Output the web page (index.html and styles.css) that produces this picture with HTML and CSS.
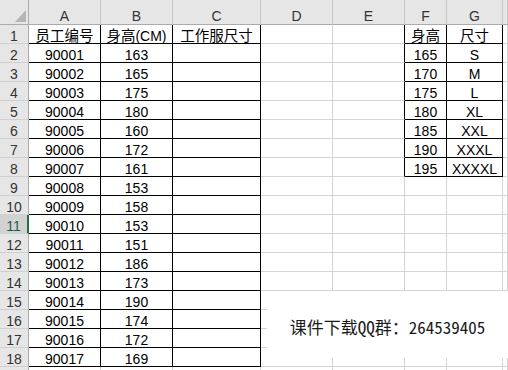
FILE: index.html
```html
<!DOCTYPE html>
<html lang="zh-CN">
<head>
<meta charset="utf-8">
<title>工作服尺寸</title>
<link rel="stylesheet" href="styles.css">
</head>
<body>
<div class="sheet">
  <div class="corner"><svg width="28" height="24" viewBox="0 0 28 24"><polygon points="15,22 26,22 26,10" fill="#b5b5b5"/></svg></div>
  <div class="ch">A</div><div class="ch">B</div><div class="ch">C</div><div class="ch">D</div><div class="ch">E</div><div class="ch">F</div><div class="ch">G</div><div class="ch"></div>

  <div class="rh">1</div><div class="c k"><span class="zh">员工编号</span></div><div class="c k"><span class="zh">身高</span>(CM)</div><div class="c k"><span class="zh">工作服尺寸</span></div><div class="c"></div><div class="c kr"></div><div class="c k"><span class="zh">身高</span></div><div class="c k"><span class="zh">尺寸</span></div><div class="c"></div>
  <div class="rh">2</div><div class="c k">90001</div><div class="c k">163</div><div class="c k"></div><div class="c"></div><div class="c kr"></div><div class="c k">165</div><div class="c k">S</div><div class="c"></div>
  <div class="rh">3</div><div class="c k">90002</div><div class="c k">165</div><div class="c k"></div><div class="c"></div><div class="c kr"></div><div class="c k">170</div><div class="c k">M</div><div class="c"></div>
  <div class="rh">4</div><div class="c k">90003</div><div class="c k">175</div><div class="c k"></div><div class="c"></div><div class="c kr"></div><div class="c k">175</div><div class="c k">L</div><div class="c"></div>
  <div class="rh">5</div><div class="c k">90004</div><div class="c k">180</div><div class="c k"></div><div class="c"></div><div class="c kr"></div><div class="c k">180</div><div class="c k">XL</div><div class="c"></div>
  <div class="rh">6</div><div class="c k">90005</div><div class="c k">160</div><div class="c k"></div><div class="c"></div><div class="c kr"></div><div class="c k">185</div><div class="c k">XXL</div><div class="c"></div>
  <div class="rh">7</div><div class="c k">90006</div><div class="c k">172</div><div class="c k"></div><div class="c"></div><div class="c kr"></div><div class="c k">190</div><div class="c k">XXXL</div><div class="c"></div>
  <div class="rh">8</div><div class="c k">90007</div><div class="c k">161</div><div class="c k"></div><div class="c"></div><div class="c kr"></div><div class="c k">195</div><div class="c k">XXXXL</div><div class="c"></div>
  <div class="rh">9</div><div class="c k">90008</div><div class="c k">153</div><div class="c k"></div><div class="c"></div><div class="c"></div><div class="c"></div><div class="c"></div><div class="c"></div>
  <div class="rh">10</div><div class="c k">90009</div><div class="c k">158</div><div class="c k"></div><div class="c"></div><div class="c"></div><div class="c"></div><div class="c"></div><div class="c"></div>
  <div class="rh sel">11</div><div class="c k">90010</div><div class="c k">153</div><div class="c k"></div><div class="c"></div><div class="c"></div><div class="c"></div><div class="c"></div><div class="c"></div>
  <div class="rh">12</div><div class="c k">90011</div><div class="c k">151</div><div class="c k"></div><div class="c"></div><div class="c"></div><div class="c"></div><div class="c"></div><div class="c"></div>
  <div class="rh">13</div><div class="c k">90012</div><div class="c k">186</div><div class="c k"></div><div class="c"></div><div class="c"></div><div class="c"></div><div class="c"></div><div class="c"></div>
  <div class="rh">14</div><div class="c k">90013</div><div class="c k">173</div><div class="c k"></div><div class="c"></div><div class="c"></div><div class="c"></div><div class="c"></div><div class="c"></div>
  <div class="rh">15</div><div class="c k">90014</div><div class="c k">190</div><div class="c k"></div><div class="c"></div><div class="c"></div><div class="c"></div><div class="c"></div><div class="c"></div>
  <div class="rh">16</div><div class="c k">90015</div><div class="c k">174</div><div class="c k"></div><div class="c"></div><div class="c"></div><div class="c"></div><div class="c"></div><div class="c"></div>
  <div class="rh">17</div><div class="c k">90016</div><div class="c k">172</div><div class="c k"></div><div class="c"></div><div class="c"></div><div class="c"></div><div class="c"></div><div class="c"></div>
  <div class="rh">18</div><div class="c k">90017</div><div class="c k">169</div><div class="c k"></div><div class="c"></div><div class="c"></div><div class="c"></div><div class="c"></div><div class="c"></div>
  <div class="rh"></div><div class="c"></div><div class="c"></div><div class="c"></div><div class="c"></div><div class="c"></div><div class="c"></div><div class="c"></div><div class="c"></div>
</div>
<div class="textbox">课件下载QQ群：264539405</div>
</body>
</html>
```

FILE: styles.css
```css
html, body {
  margin: 0;
  padding: 0;
}
body {
  width: 508px;
  height: 370px;
  overflow: hidden;
  position: relative;
  background: #ffffff;
  font-family: "Liberation Sans", "Noto Sans CJK SC", sans-serif;
  font-size: 14px;
  color: #000;
}
.sheet {
  display: grid;
  grid-template-columns: 29px 72px 72px 88px 72px 72px 42px 56px 1fr;
  grid-template-rows: 25px repeat(19, 19px);
}
.sheet > div {
  box-sizing: border-box;
  border-right: 1px solid #d4d4d4;
  border-bottom: 1px solid #d4d4d4;
  text-align: center;
  line-height: 16px;
  white-space: nowrap;
  min-width: 0;
}
.sheet > .c {
  padding-top: 3px;
}
.sheet > .k {
  border-right-color: #000;
  border-bottom-color: #000;
}
.sheet > .kr {
  border-right-color: #000;
}
.sheet > .corner {
  background: #e6e6e6;
  border-right-color: #ababab;
  border-bottom-color: #ababab;
  line-height: 0;
  overflow: hidden;
}
.corner svg {
  display: block;
}
.sheet > .ch {
  background: #e6e6e6;
  color: #333;
  border-right-color: #c6c6c6;
  border-bottom-color: #ababab;
  padding-top: 8px;
}
.sheet > .rh {
  background: #e6e6e6;
  color: #333;
  border-right-color: #ababab;
  border-bottom-color: #d0d0d0;
  padding-top: 3px;
  overflow: hidden;
}
.sheet > .rh.sel {
  background: #d2d2d2;
  color: #1e5e45;
  border-right: 2px solid #217346;
}
.zh {
  font-family: "Noto Sans CJK SC", sans-serif;
  font-size: 14.5px;
  line-height: 14px;
}
.textbox {
  position: absolute;
  left: 267px;
  top: 291px;
  width: 241px;
  height: 67px;
  background: #fff;
  display: flex;
  align-items: center;
  justify-content: center;
  font-family: "Noto Sans Mono CJK SC", "Noto Sans CJK SC", sans-serif;
  font-size: 17px;
  font-weight: 300;
  color: #1a1a1a;
  padding-top: 4px;
  box-sizing: border-box;
}
```
